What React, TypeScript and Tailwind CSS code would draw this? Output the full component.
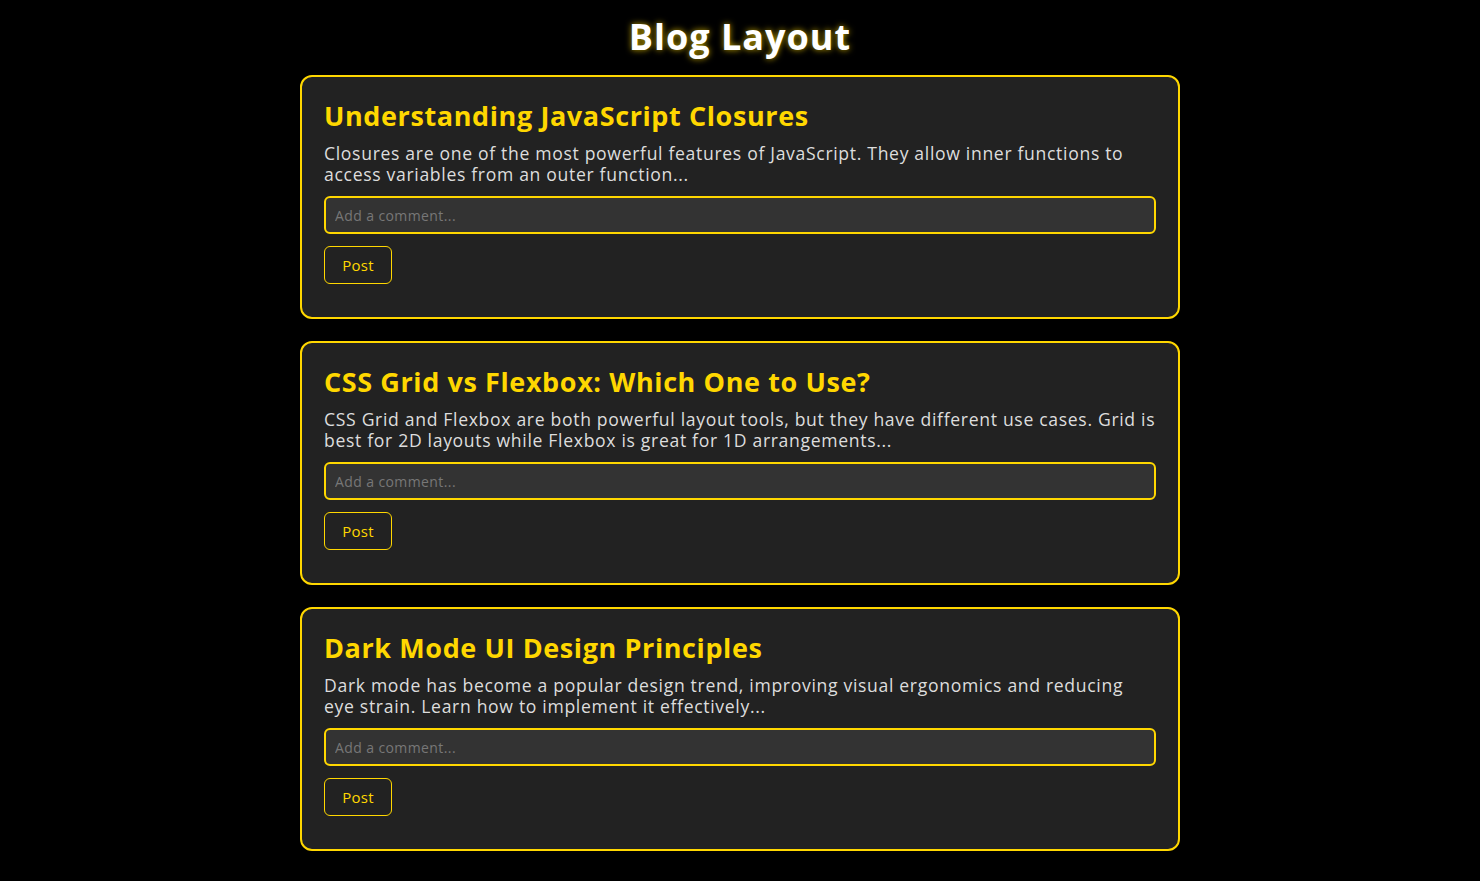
const posts = [
  {
    title: "Understanding JavaScript Closures",
    excerpt:
      "Closures are one of the most powerful features of JavaScript. They allow inner functions to access variables from an outer function...",
  },
  {
    title: "CSS Grid vs Flexbox: Which One to Use?",
    excerpt:
      "CSS Grid and Flexbox are both powerful layout tools, but they have different use cases. Grid is best for 2D layouts while Flexbox is great for 1D arrangements...",
  },
  {
    title: "Dark Mode UI Design Principles",
    excerpt:
      "Dark mode has become a popular design trend, improving visual ergonomics and reducing eye strain. Learn how to implement it effectively...",
  },
];

function PostCard({ title, excerpt }: { title: string; excerpt: string }) {
  return (
    <article className="rounded-xl border-2 border-[#ffd700] bg-[#222] px-[22px] pt-[22px] pb-[33px]">
      <h2 className="text-[27px] font-bold leading-[34px] tracking-[0.6px] text-[#ffd700]">{title}</h2>
      <p className="mt-[10px] text-[17.6px] leading-[21px] tracking-[0.67px] text-[#ddd]">{excerpt}</p>
      <input
        type="text"
        placeholder="Add a comment..."
        className="mt-[11px] block h-[38px] w-full rounded-md border-2 border-[#ffd700] bg-[#333] px-[9px] text-[14px] tracking-[0.4px] text-[#ddd] placeholder:text-[#777] outline-none"
      />
      <button
        type="button"
        className="mt-[12px] h-[38px] w-[68px] rounded-md border border-[#ffd700] bg-transparent text-[15px] tracking-[0.3px] text-[#ffd700]"
      >
        Post
      </button>
    </article>
  );
}

export default function App() {
  return (
    <div className="min-h-[881px] bg-black font-['Open_Sans',sans-serif] pt-[14px]">
      <h1 className="text-center text-[36px] font-bold leading-[46px] tracking-[1px] text-white [text-shadow:0_0_6px_rgba(255,215,0,0.75)]">
        Blog Layout
      </h1>
      <main className="mx-auto mt-[15px] flex w-[880px] flex-col gap-[22px]">
        {posts.map((p) => (
          <PostCard key={p.title} {...p} />
        ))}
      </main>
    </div>
  );
}
